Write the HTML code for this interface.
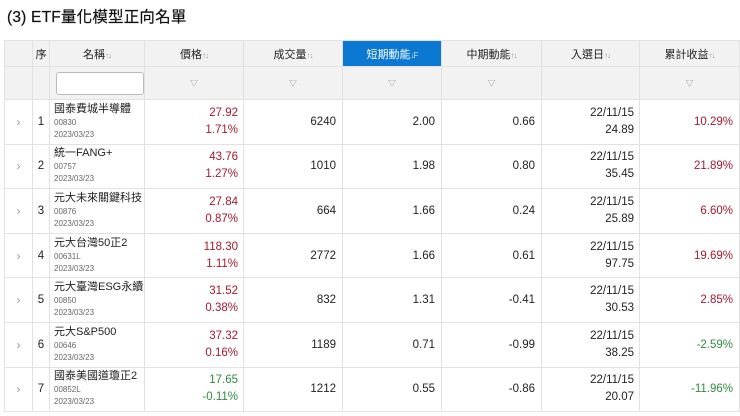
<!DOCTYPE html>
<html><head><meta charset="utf-8"><style>
body{margin:0;width:740px;height:416px;background:#fff;font-family:"Liberation Sans","Noto Sans CJK TC",sans-serif;color:#222;overflow:hidden;position:relative}
h1{position:absolute;left:7px;top:5px;margin:0;font-size:15.5px;font-weight:normal;color:#111;letter-spacing:0.2px;-webkit-text-stroke:0.2px #111}
table{position:absolute;left:4px;top:40px;border-collapse:collapse;table-layout:fixed;width:735px;font-size:11px}
td,th{border:1px solid #e2e2e2;padding:0 6px;overflow:hidden;white-space:nowrap}
th{background:#f2f2f2;font-weight:normal;height:25px;font-size:11px;color:#222}
th.act{background:#0b78d2;color:#fff}
.s{font-size:8px;color:#999;letter-spacing:-1px}
th.act .s{color:#cfe4f7}
tr.f td{background:#f2f2f2;height:32px;text-align:center;color:#888;font-size:8px}
tr.d td{height:43.6px;text-align:right;font-size:11.5px}
tr.d td.a{text-align:center;color:#999;font-size:12px}
tr.d td.n{text-align:center}
tr.d td.nm{text-align:left;line-height:12px;padding-left:4px}
.nm b{font-weight:normal;font-size:11px;display:block;margin-bottom:2px}
.nm i{font-style:normal;font-size:8px;color:#666;display:block}
.r{color:#a31930}.g{color:#2f8c3c}
.two{line-height:17px}
td.two{padding-right:5px}
input{width:82px;height:19px;border:1px solid #bbb;border-radius:3px;margin:0}
</style></head><body>
<h1>(3) ETF量化模型正向名單</h1>
<table>
<colgroup><col style="width:28px"><col style="width:17px"><col style="width:95px"><col style="width:99px"><col style="width:99px"><col style="width:99px"><col style="width:100px"><col style="width:98px"><col style="width:100px"></colgroup>
<tr><th></th><th style="padding:0">序</th><th>名稱<span class="s">↑↓</span></th><th>價格<span class="s">↑↓</span></th><th>成交量<span class="s">↑↓</span></th><th class="act">短期動能<span class="s">↓F</span></th><th>中期動能<span class="s">↑↓</span></th><th>入選日<span class="s">↑↓</span></th><th>累計收益<span class="s">↑↓</span></th></tr>
<tr class="f"><td></td><td></td><td><input></td><td>▽</td><td>▽</td><td>▽</td><td>▽</td><td></td><td>▽</td></tr>
<tr class="d"><td class="a">›</td><td class="n" style="padding:0">1</td><td class="nm"><b>國泰費城半導體</b><i>00830</i><i>2023/03/23</i></td><td class="r two">27.92<br>1.71%</td><td>6240</td><td>2.00</td><td>0.66</td><td class="two">22/11/15<br>24.89</td><td class="r">10.29%</td></tr>
<tr class="d"><td class="a">›</td><td class="n" style="padding:0">2</td><td class="nm"><b>統一FANG+</b><i>00757</i><i>2023/03/23</i></td><td class="r two">43.76<br>1.27%</td><td>1010</td><td>1.98</td><td>0.80</td><td class="two">22/11/15<br>35.45</td><td class="r">21.89%</td></tr>
<tr class="d"><td class="a">›</td><td class="n" style="padding:0">3</td><td class="nm"><b>元大未來關鍵科技</b><i>00876</i><i>2023/03/23</i></td><td class="r two">27.84<br>0.87%</td><td>664</td><td>1.66</td><td>0.24</td><td class="two">22/11/15<br>25.89</td><td class="r">6.60%</td></tr>
<tr class="d"><td class="a">›</td><td class="n" style="padding:0">4</td><td class="nm"><b>元大台灣50正2</b><i>00631L</i><i>2023/03/23</i></td><td class="r two">118.30<br>1.11%</td><td>2772</td><td>1.66</td><td>0.61</td><td class="two">22/11/15<br>97.75</td><td class="r">19.69%</td></tr>
<tr class="d"><td class="a">›</td><td class="n" style="padding:0">5</td><td class="nm"><b>元大臺灣ESG永續</b><i>00850</i><i>2023/03/23</i></td><td class="r two">31.52<br>0.38%</td><td>832</td><td>1.31</td><td>-0.41</td><td class="two">22/11/15<br>30.53</td><td class="r">2.85%</td></tr>
<tr class="d"><td class="a">›</td><td class="n" style="padding:0">6</td><td class="nm"><b>元大S&amp;P500</b><i>00646</i><i>2023/03/23</i></td><td class="r two">37.32<br>0.16%</td><td>1189</td><td>0.71</td><td>-0.99</td><td class="two">22/11/15<br>38.25</td><td class="g">-2.59%</td></tr>
<tr class="d"><td class="a">›</td><td class="n" style="padding:0">7</td><td class="nm"><b>國泰美國道瓊正2</b><i>00852L</i><i>2023/03/23</i></td><td class="g two">17.65<br>-0.11%</td><td>1212</td><td>0.55</td><td>-0.86</td><td class="two">22/11/15<br>20.07</td><td class="g">-11.96%</td></tr>
</table>
</body></html>
